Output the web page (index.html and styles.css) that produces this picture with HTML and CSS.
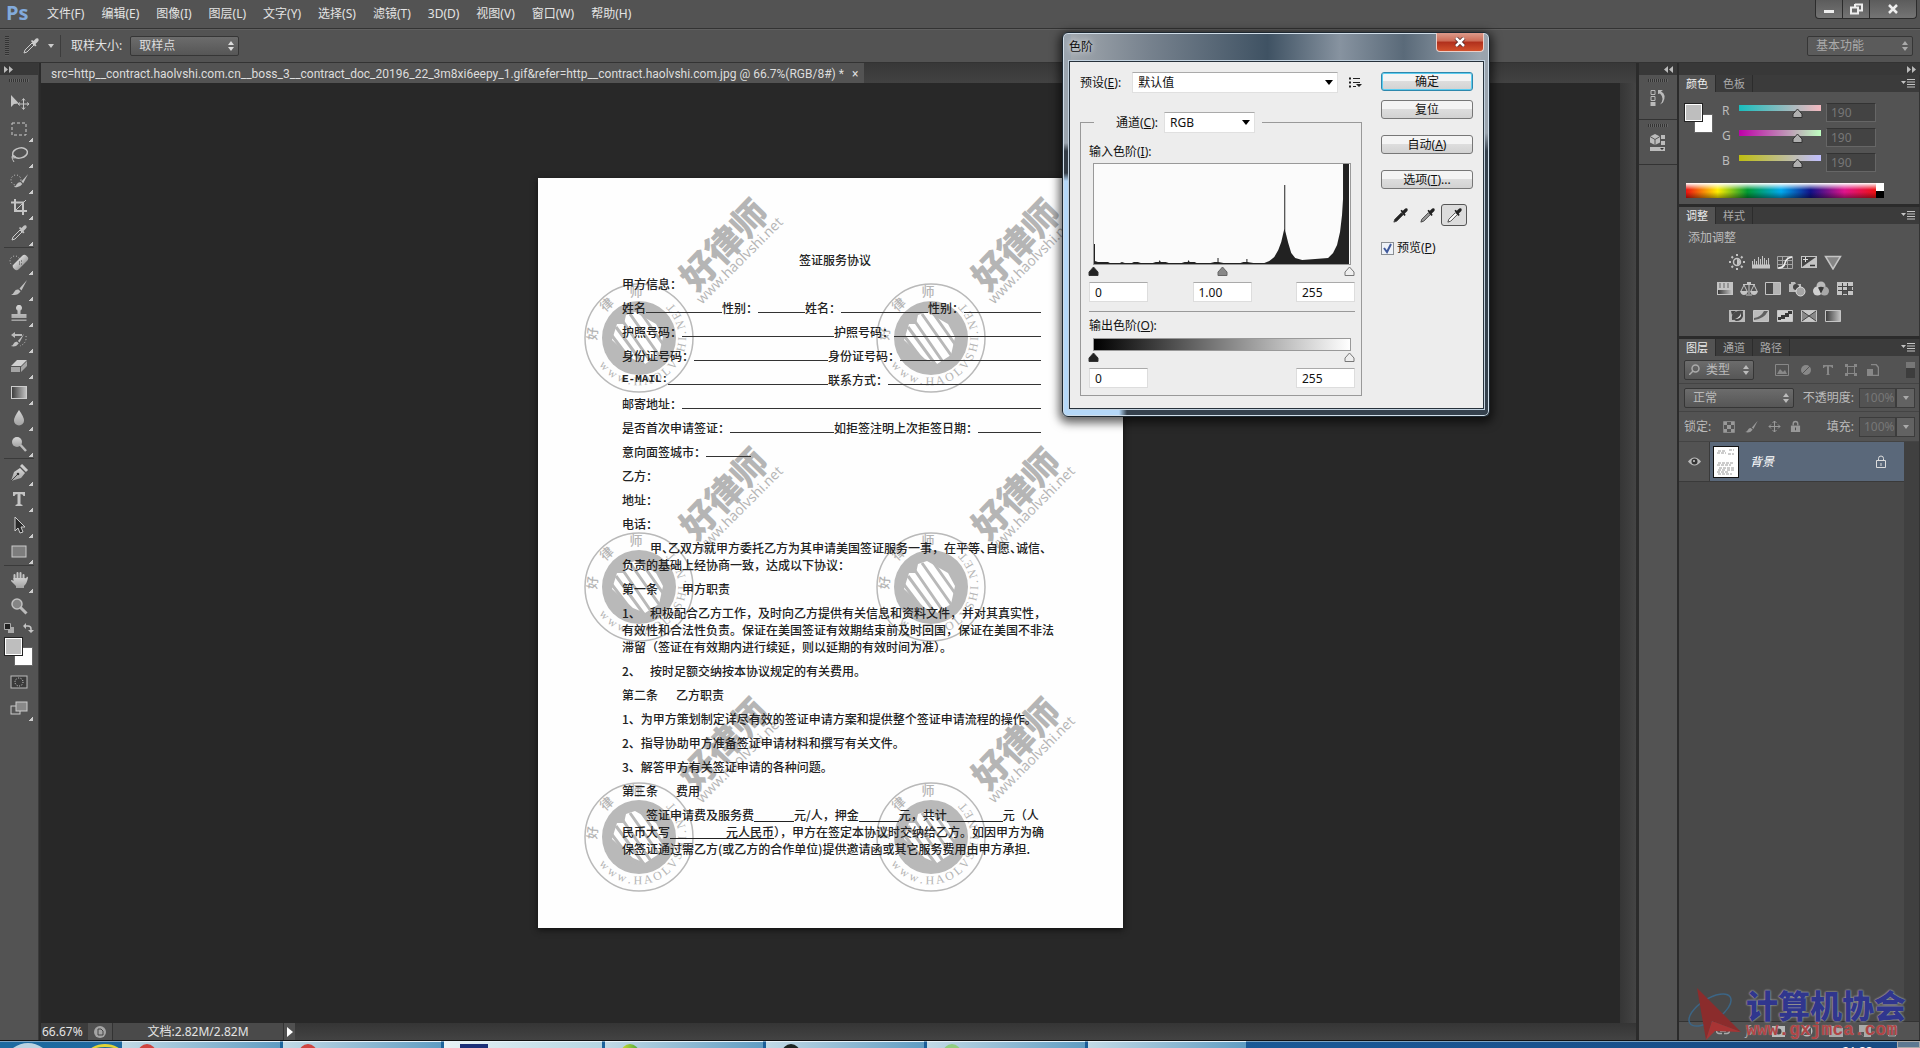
FILE: index.html
```html
<!DOCTYPE html>
<html lang="zh-CN">

<head>
    <meta charset="UTF-8">
    <meta name="viewport" content="width=device-width, initial-scale=1.0">
    <title>Photoshop</title>
    <link rel="stylesheet" href="styles.css">
</head>

<body>
    <!-- 公用图标 -->
    <svg class="sprite" aria-hidden="true">
        <defs>
            <linearGradient id="metal" x1="0" y1="0" x2="0" y2="1">
                <stop offset="0" stop-color="#d6d6d6" />
                <stop offset="1" stop-color="#a2a2a2" />
            </linearGradient>
            <linearGradient id="fade">
                <stop offset="0" stop-color="#3a3a3a" />
                <stop offset="1" stop-color="#c4c4c4" />
            </linearGradient>
            <symbol id="i-dropper" viewBox="0 0 18 18">
                <path class="tube" d="M2 16l1-3 7-7 2 2-7 7z" />
                <path d="M9 4l1-1 1.500 1L14 1.600q2-1 2.500.5t-.5 2.500L13.500 7l1 1.500-1.500 1z" fill="currentColor" />
            </symbol>
            <symbol id="i-lock" viewBox="0 0 12 14">
                <path d="M3.500 6V4a2.500 2.500 0 0 1 5 0v2" fill="none" stroke="currentColor" stroke-width="1.500" />
                <path d="M1 6h10v7H1z" fill="currentColor" />
                <path d="M5.500 8h1v3h-1z" fill="#444" />
            </symbol>
            <symbol id="i-brush" viewBox="0 0 18 18">
                <path d="M17 1L9.500 9.500l2 2zM8.500 10.500q-3-.5-4 2T1 15.500q6 2 9.500-3z" fill="currentColor" />
            </symbol>
            <symbol id="i-menu" viewBox="0 0 15 9">
                <path d="M0 2h5L2.500 5z" fill="currentColor" />
                <path d="M6 .5h8M6 3h8M6 5.500h8M6 8h8" stroke="currentColor" />
            </symbol>
            <symbol id="i-updown" viewBox="0 0 6 10">
                <path d="M0 4l3-4 3 4zM0 6l3 4 3-4z" fill="currentColor" />
            </symbol>

            <!-- 文档水印 -->
            <g id="seal">
                <circle r="54" fill="none" stroke="#b9b9b9" stroke-width="1.500" />
                <circle r="37" fill="#b9b9b9" />
                <path d="M-13-23L-4-26 17-14 24-1 20 17 6 26-6 21-27 2-22-14-15-14z" fill="#fff" />
                <path d="M-17-18L14 27M-9-24L22 20M2-25L26 9M-23-11L7 30M-29-5L-4 28" stroke="#b9b9b9" stroke-width="3" />
                <g class="seal-cn">
                    <text transform="translate(-42 -4) rotate(-85)">好</text>
                    <text transform="translate(-29 -30) rotate(-44)">律</text>
                    <text transform="translate(-3 -42)">师</text>
                </g>
                <path id="arc" d="M-40 27A48 48 0 1 0 20-44" fill="none" />
                <text class="seal-en"><textPath href="#arc">w w w . H A O L V S H I . N E T</textPath></text>
            </g>
            <g id="mark">
                <text class="mark-cn" transform="translate(184 65) rotate(-46)">好律师</text>
                <text class="mark-en" transform="translate(201 82) rotate(-45)">www.haolvshi.net</text>
            </g>
        </defs>
    </svg>

    <header class="menubar">
        <span class="logo">Ps</span>
        <nav class="menu">
            <a href="#">文件(F)</a>
            <a href="#">编辑(E)</a>
            <a href="#">图像(I)</a>
            <a href="#">图层(L)</a>
            <a href="#">文字(Y)</a>
            <a href="#">选择(S)</a>
            <a href="#">滤镜(T)</a>
            <a href="#">3D(D)</a>
            <a href="#">视图(V)</a>
            <a href="#">窗口(W)</a>
            <a href="#">帮助(H)</a>
        </nav>
        <div class="win-btns">
            <button aria-label="最小化"><svg width="12" height="12"><path d="M1 7h10v3H1z" fill="#eee" /></svg></button>
            <button aria-label="还原"><svg width="13" height="12"><path d="M5 1.500h7v6H9M5 1v3M1 4.500h7v6H1z" fill="none" stroke="#eee" stroke-width="2" /></svg></button>
            <button class="wide" aria-label="关闭"><svg width="12" height="12"><path d="M2 2l8 8M10 2l-8 8" stroke="#eee" stroke-width="2.500" /></svg></button>
        </div>
    </header>

    <div class="optbar">
        <i class="grip-v"></i>
        <svg class="cur-tool" width="18" height="18"><use href="#i-dropper" /></svg>
        <i class="caret"></i>
        <label class="opt-label" for="sample">取样大小:</label>
        <div class="dark-select sample">
            <select id="sample"><option>取样点</option></select>
            <svg width="6" height="10"><use href="#i-updown" /></svg>
        </div>
        <div class="dark-select workspace">
            <select aria-label="工作区"><option>基本功能</option></select>
            <svg width="6" height="10"><use href="#i-updown" /></svg>
        </div>
    </div>

    <main class="main">
        <aside class="tools">
            <div class="strip"><svg width="9" height="7"><path d="M0 0l4 3.500L0 7zM5 0l4 3.500L5 7z" fill="#bbb" /></svg></div>
            <i class="grip"></i>
            <button class="no-more" aria-label="移动"><svg viewBox="0 0 20 18"><path d="M2 1v12l3-3 5-.5z" fill="#c4c4c4" /><path d="M14.500 5v10M9.500 10h10M13 6.500l1.500-2 1.500 2M13 13.500l1.500 2 1.500-2M11 8.500l-2 1.500 2 1.500M18 8.500l2 1.500-2 1.500" fill="none" stroke="#c4c4c4" /></svg></button>
            <button aria-label="选框"><svg viewBox="0 0 20 18"><rect x="3" y="3" width="14" height="12" fill="none" stroke="#ccc" stroke-dasharray="3 2" /></svg></button>
            <button aria-label="套索"><svg viewBox="0 0 20 18"><ellipse cx="11" cy="7" rx="7.500" ry="5" transform="rotate(-12 11 7)" fill="none" stroke="#c4c4c4" stroke-width="1.500" /><path d="M4 9q-2 3 1 3t1-2q-3-1-3 1t2 5" fill="none" stroke="#c4c4c4" /></svg></button>
            <button aria-label="快速选择"><svg viewBox="0 0 20 18"><circle cx="7" cy="8" r="5" fill="none" stroke="#ccc" stroke-dasharray="1 2" /><use href="#i-brush" x="4" y="1" width="16" height="16" /></svg></button>
            <button aria-label="裁剪"><svg viewBox="0 0 20 18"><path d="M6 1v12h12M2 4.500h12V17" fill="none" stroke="#c4c4c4" stroke-width="2" /><path d="M6 13L17 2" stroke="#c4c4c4" /></svg></button>
            <button aria-label="吸管"><svg viewBox="0 0 20 18"><use href="#i-dropper" width="18" height="18" x="1" /></svg></button>
            <hr>
            <button aria-label="修复画笔"><svg viewBox="0 0 20 18"><circle cx="6" cy="8" r="5" fill="none" stroke="#ccc" stroke-dasharray="1 2" /><rect x="2.500" y="6" width="18" height="7" rx="3" transform="rotate(-45 11.500 9.500)" fill="url(#metal)" /><path d="M10 9h1M12 11h1M12 8h1M10 11h1" stroke="#444" /></svg></button>
            <button aria-label="画笔"><svg viewBox="0 0 20 18"><use href="#i-brush" width="18" height="18" x="1" /></svg></button>
            <button aria-label="仿制图章"><svg viewBox="0 0 20 18"><path d="M8.500 9V5.500a3 3 0 1 1 3 0V9h6v4h-15V9zM2.500 14.500h15V16h-15z" fill="url(#metal)" /></svg></button>
            <button aria-label="历史画笔"><svg viewBox="0 0 20 18"><path d="M2 4l4-3v2h7v2H6v2z" fill="#bbb" /><use href="#i-brush" x="1" y="2" width="15" height="15" /><path d="M17 5q1 7-6 10" fill="none" stroke="#ccc" stroke-dasharray="1 2" /></svg></button>
            <button aria-label="橡皮擦"><svg viewBox="0 0 20 18"><path d="M8 3h10l-6 6H2z" fill="#d0d0d0" /><path d="M2 10h9v5H2zM12 10l6-6v5l-6 6z" fill="#a4a4a4" /></svg></button>
            <button aria-label="渐变"><svg viewBox="0 0 20 18"><rect x="2.500" y="3.500" width="15" height="12" fill="url(#fade)" stroke="#ccc" /></svg></button>
            <button aria-label="模糊"><svg viewBox="0 0 20 18"><path d="M10 1q-5 7-5 10.500a5 5 0 0 0 10 0Q15 8 10 1z" fill="url(#metal)" /></svg></button>
            <button aria-label="减淡"><svg viewBox="0 0 20 18"><circle cx="8" cy="7" r="5" fill="url(#metal)" /><path d="M11.500 10l5.500 6" stroke="#bbb" stroke-width="2.500" /></svg></button>
            <hr>
            <button aria-label="钢笔"><svg viewBox="0 0 20 18"><path d="M2 17L5 8l6-4 5 5-4 5z" fill="url(#metal)" /><path d="M2 17l6-6" stroke="#444" /><circle cx="9" cy="10" r="1.300" fill="#333" /><path d="M12 1l6 6" stroke="#ccc" stroke-width="3" /></svg></button>
            <button aria-label="文字"><svg viewBox="0 0 20 18"><path d="M4 2h12v4h-1.500q-.5-2-3-2v10l2 1v1h-7v-1l2-1V4q-2.500 0-3 2H4z" fill="#c4c4c4" /></svg></button>
            <button aria-label="路径选择"><svg viewBox="0 0 20 18"><path d="M6 1v14l3-3 2 5 3-1-2-5h4z" fill="#2a2a2a" stroke="#ccc" /></svg></button>
            <button aria-label="矩形"><svg viewBox="0 0 20 18"><rect x="3" y="4" width="14" height="11" fill="#7d7d7d" stroke="#ccc" /></svg></button>
            <hr>
            <button aria-label="抓手"><svg viewBox="0 0 20 18"><path d="M5.500 8V4M8.500 7V2M11.500 7V2M14.500 8V4" stroke="#c4c4c4" stroke-width="2" stroke-linecap="round" /><path d="M4.500 7h11q2 1 2.500-1.500l1 1q-1 6-4 8.500v2H7v-2l-5-5q0-2 2.500 0z" fill="url(#metal)" /></svg></button>
            <button class="no-more" aria-label="缩放"><svg viewBox="0 0 20 18"><path d="M11.500 10.500l6 6" stroke="#bbb" stroke-width="3" /><circle cx="8" cy="7" r="5" fill="#858585" stroke="#c0c0c0" stroke-width="1.500" /></svg></button>
            <div class="swap">
                <svg width="10" height="10"><path d="M4 4h6v6H4z" fill="#aaa" /><path d="M.5.5h6v6h-6z" fill="#222" stroke="#aaa" /></svg>
                <svg width="11" height="10"><path d="M2 3h3q3 0 3 3v2" fill="none" stroke="#c4c4c4" stroke-width="1.500" /><path d="M0 3l3-3v6zM5 7h6l-3 3z" fill="#c4c4c4" /></svg>
            </div>
            <div class="swatch"><i class="bg"></i><i class="fg"></i></div>
            <button class="no-more" aria-label="快速蒙版"><svg viewBox="0 0 20 18"><rect x="2" y="3" width="16" height="12" fill="#3a3a3a" stroke="#bbb" /><circle cx="10" cy="9" r="4" fill="none" stroke="#ddd" stroke-dasharray="1 1.500" /></svg></button>
            <button aria-label="屏幕模式"><svg viewBox="0 0 20 18"><rect x="2" y="7" width="9" height="8" fill="#555" stroke="#ccc" /><rect x="7" y="3" width="11" height="9" fill="#888" stroke="#ccc" /></svg></button>
        </aside>

        <section class="doc">
            <div class="tabs">
                <div class="tab">src=http__contract.haolvshi.com.cn__boss_3__contract_doc_20196_22_3m8xi6eepy_1.gif&amp;refer=http__contract.haolvshi.com.jpg @ 66.7%(RGB/8#) * <button aria-label="关闭文档">×</button></div>
            </div>
            <div class="stage">
                <div class="canvas">
                    <article class="paper">
                        <svg class="watermark" viewBox="0 0 585 750">
                            <use href="#mark" /><use href="#mark" x="292" />
                            <use href="#mark" y="249" /><use href="#mark" x="292" y="249" />
                            <use href="#mark" y="499" /><use href="#mark" x="292" y="499" />
                            <use href="#seal" x="101" y="160" /><use href="#seal" x="393" y="160" />
                            <use href="#seal" x="101" y="409" /><use href="#seal" x="393" y="409" />
                            <use href="#seal" x="101" y="659" /><use href="#seal" x="393" y="659" />
                        </svg>
                        <h1>签证服务协议</h1>
                        <p>甲方信息：</p>
                        <p class="row"><span class="field f-name">姓名<i></i></span><span class="field f-sex">性别：<i></i></span><span class="field f-name2">姓名：<i></i></span><span class="field">性别：<i></i></span></p>
                        <p class="row"><span class="field f-half">护照号码：<i></i></span><span class="field">护照号码：<i></i></span></p>
                        <p class="row"><span class="field f-id">身份证号码：<i></i></span><span class="field">身份证号码：<i></i></span></p>
                        <p class="row"><span class="field f-id"><b>E-MAIL:</b><i></i></span><span class="field">联系方式：<i></i></span></p>
                        <p class="row"><span class="field">邮寄地址：<i></i></span></p>
                        <p class="row"><span class="field f-half">是否首次申请签证：<i></i></span><span class="field">如拒签注明上次拒签日期：<i></i></span></p>
                        <p class="row"><span class="field f-city">意向面签城市：<i></i></span></p>
                        <p>乙方：</p>
                        <p>地址：</p>
                        <p>电话：</p>
                        <p><span class="tab-in"></span>甲<s>、</s>乙双方就甲方委托乙方为其申请美国签证服务一事，在平等<s>、</s>自愿<s>、</s>诚信<s>、</s><br>负责的基础上经协商一致，达成以下协议：</p>
                        <p>第一条<span class="gap"></span>甲方职责</p>
                        <p><span class="num">1、</span>积极配合乙方工作，及时向乙方提供有关信息和资料文件，并对其真实性，<br>有效性和合法性负责。保证在美国签证有效期结束前及时回国，保证在美国不非法<br>滞留（签证在有效期内进行续延，则以延期的有效时间为准）。</p>
                        <p><span class="num">2、</span>按时足额交纳按本协议规定的有关费用。</p>
                        <p>第二条<span class="gap short"></span>乙方职责</p>
                        <p>1、为甲方策划制定详尽有效的签证申请方案和提供整个签证申请流程的操作。</p>
                        <p>2、指导协助甲方准备签证申请材料和撰写有关文件。</p>
                        <p>3、解答甲方有关签证申请的各种问题。</p>
                        <p>第三条<span class="gap short"></span>费用</p>
                        <p><span class="gap"></span>签证申请费及服务费<i class="fill"></i>元/人，押金<i class="fill"></i>元，共计<i class="fill long"></i>元（人<br>民币大写<i class="fill long"></i><u>元人民币</u>），甲方在签定本协议时交纳给乙方。如因甲方为确<br>保签证通过需乙方(或乙方的合作单位)提供邀请函或其它服务费用由甲方承担.</p>
                    </article>
                </div>
                <div class="vscroll"></div>
            </div>
            <footer class="status">
                <span class="zoom">66.67%</span>
                <span class="st-icon"><svg width="12" height="12"><circle cx="6" cy="6" r="6" fill="#a5a5a5" /><path d="M4 3h3l2 2v4H4z" fill="none" stroke="#444" /></svg></span>
                <span class="size">文档:2.82M/2.82M</span>
                <button aria-label="状态菜单"><svg width="6" height="10"><path d="M0 0l6 5-6 5z" fill="#fff" /></svg></button>
            </footer>
        </section>

        <aside class="dock">
            <div class="strip end"><svg width="9" height="7"><path d="M4 0L0 3.500 4 7zM9 0L5 3.500 9 7z" fill="#bbb" /></svg></div>
            <div class="dock-box">
                <i class="grip"></i>
                <button aria-label="历史记录"><svg width="18" height="19"><path d="M2 2.500h4v4H2zM2 8.500h4v4H2z" fill="none" stroke="#bbb" /><path d="M1.500 14h5v4h-5z" fill="#bbb" /><path d="M9 6V2h5l-2 1.500q6 3 2 11l-3 2q5-6 0-11z" fill="#bbb" /></svg></button>
            </div>
            <div class="dock-box">
                <i class="grip"></i>
                <button aria-label="属性"><svg width="18" height="19"><path d="M6 1l5 2.500v6L6 12 1 9.500v-6z" fill="#bbb" /><path d="M1 3.500l5 3 5-3M6 6.500V12" fill="none" stroke="#555" /><path d="M12 2h4v4h-4zM12 8h4v4h-4zM1 14h15v4H1z" fill="#bbb" /><path d="M11 15h4l-2 2z" fill="#333" /></svg></button>
            </div>
        </aside>

        <aside class="panels">
            <div class="strip end"><svg width="9" height="7"><path d="M0 0l4 3.500L0 7zM5 0l4 3.500L5 7z" fill="#bbb" /></svg></div>

            <section class="panel">
                <div class="ptabs"><a class="on" href="#">颜色</a><a href="#">色板</a><svg width="15" height="9"><use href="#i-menu" /></svg></div>
                <div class="color">
                    <div class="swatch"><i class="bg"></i><i class="fg"></i></div>
                    <div class="channels">
                        <div class="channel"><label for="r">R</label><input class="bar-r" type="range" min="0" max="255" value="190" aria-label="红"><input id="r" type="text" value="190"></div>
                        <div class="channel"><label for="g">G</label><input class="bar-g" type="range" min="0" max="255" value="190" aria-label="绿"><input id="g" type="text" value="190"></div>
                        <div class="channel"><label for="b">B</label><input class="bar-b" type="range" min="0" max="255" value="190" aria-label="蓝"><input id="b" type="text" value="190"></div>
                    </div>
                    <div class="spectrum"><i></i></div>
                </div>
            </section>

            <section class="panel">
                <div class="ptabs"><a class="on" href="#">调整</a><a href="#">样式</a><svg width="15" height="9"><use href="#i-menu" /></svg></div>
                <div class="adjust">
                    <h2>添加调整</h2>
                    <div class="icons">
                        <svg viewBox="0 0 18 16"><circle cx="9" cy="8" r="3.500" fill="none" stroke="#c4c4c4" stroke-width="1.500" /><path d="M9 5v6a3 3 0 0 0 0-6z" fill="#c4c4c4" /><path d="M9 0v2M9 14v2M1 8h2M15 8h2M3.500 2.500L5 4M14.500 2.500L13 4M3.500 13.500L5 12M14.500 13.500L13 12" stroke="#c4c4c4" stroke-width="2" /></svg>
                        <svg viewBox="0 0 18 16"><path d="M0 11h18v3H0zM.5 11V7M2.500 11V5M4.500 11V7M6.500 11V3M8.500 11V5M10.500 11V2M12.500 11V4M14.500 11V6M16.500 11V4" fill="#c4c4c4" stroke="#c4c4c4" /></svg>
                        <svg viewBox="0 0 18 16"><path d="M1.500 2.500h15v12h-15zM6.500 2v12M11.500 2v12M1 6.500h15M1 10.500h15" fill="none" stroke="#a4a4a4" /><path d="M2 14q6 0 7-5t7-6" fill="none" stroke="#eee" stroke-width="1.500" /></svg>
                        <svg viewBox="0 0 18 16"><path d="M1 2h16v12H1z" fill="#c4c4c4" /><path d="M2 3h14L2 13z" fill="#444" /><path d="M3 5.500h5M5.500 3v5" stroke="#ddd" /><path d="M10 11.500h5" stroke="#333" stroke-width="1.500" /></svg>
                        <svg viewBox="0 0 18 16"><path d="M1.500 2.500h15L9 15z" fill="#858585" stroke="#c4c4c4" stroke-width="1.500" /></svg>
                    </div>
                    <div class="icons">
                        <svg viewBox="0 0 18 16"><path d="M1 1h16v13H1z" fill="#c4c4c4" /><path d="M4 2v5M8 2v5M12 2v5" stroke="#666" /><path d="M2 9h14v4H2z" fill="url(#fade)" /></svg>
                        <svg viewBox="0 0 18 16"><path d="M9 1v12M3 3.500h12M4 4l-3 6M4 4l3 6M14 4l-3 6M14 4l3 6M6 14h6" fill="none" stroke="#c4c4c4" /><path d="M0 10h8q-1 4-4 4t-4-4zM10 10h8q-1 4-4 4t-4-4zM7 1h4v3H7z" fill="#c4c4c4" /></svg>
                        <svg viewBox="0 0 18 16"><path d="M1.500 1.500h15v12h-15z" fill="#4a4a4a" stroke="#c4c4c4" /><path d="M9 2h7v11H9z" fill="#b4b4b4" /></svg>
                        <svg viewBox="0 0 18 16"><path d="M1 3h2V1h4l1 2h5v8H1z" fill="#bbb" /><circle cx="8" cy="6" r="3" fill="#444" /><circle cx="12.500" cy="10.500" r="4.500" fill="#a5a5a5" stroke="#ddd" /></svg>
                        <svg viewBox="0 0 18 16"><circle cx="9" cy="5" r="4.500" fill="#bbb" /><circle cx="5.500" cy="10" r="4.500" fill="#d0d0d0" /><circle cx="12.500" cy="10" r="4.500" fill="#a8a8a8" /><path d="M6 6.500q3-1.500 6 0l-3 6z" fill="#383838" /></svg>
                        <svg viewBox="0 0 18 16"><path d="M1 1h16v13H1z" fill="#c4c4c4" /><path d="M6.500 2v12M11.500 2v12M2 5.500h15M2 9.500h15" stroke="#444" /><path d="M12 6h4v3h-4zM7 10h4v3H7z" fill="#555" /></svg>
                    </div>
                    <div class="icons">
                        <svg viewBox="0 0 18 16"><path d="M1 2h16v12H1z" fill="#bbb" /><path d="M3 3h5l-4 4zM15 5v3q-1 5-7 5l-3-2q0 1 3 0 5-2 7-6z" fill="#444" /><path d="M4 12q-1-6 3-8t8-1q0 7-4 8t-7 1z" fill="#4a4a4a" /><path d="M7 11q5-2 6-6 1 6-6 6z" fill="#ddd" /></svg>
                        <svg viewBox="0 0 18 16"><path d="M1.500 2.500h15v11h-15z" fill="#bbb" stroke="#c4c4c4" /><path d="M2 10q7-1 10-7h4q-4 8-14 9z" fill="#606060" /></svg>
                        <svg viewBox="0 0 18 16"><path d="M1.500 2.500h15v11h-15z" fill="#d0d0d0" stroke="#c4c4c4" /><path d="M2 9h3V7h4V5h3V3h4v3h-3v3h-4v2H5v1H2z" fill="#383838" /></svg>
                        <svg viewBox="0 0 18 16"><path d="M1.500 2.500h15v11h-15z" fill="#888" stroke="#c4c4c4" /><path d="M2 3l7 5 7-5zM2 13l7-5 7 5z" fill="#c8c8c8" /><path d="M2 3l14 10M16 3L2 13" stroke="#444" /></svg>
                        <svg viewBox="0 0 18 16"><path d="M1.500 2.500h15v11h-15z" fill="url(#fade)" stroke="#c4c4c4" /></svg>
                    </div>
                </div>
            </section>

            <section class="panel layers">
                <div class="ptabs"><a class="on" href="#">图层</a><a href="#">通道</a><a href="#">路径</a><svg width="15" height="9"><use href="#i-menu" /></svg></div>
                <div class="lrow filter">
                    <div class="dark-select kind">
                        <svg class="mag" width="11" height="11"><circle cx="6.500" cy="4.500" r="3.500" fill="none" stroke="#aaa" stroke-width="1.500" /><path d="M4 7l-4 4" stroke="#aaa" stroke-width="1.500" /></svg>
                        <select aria-label="筛选"><option>类型</option></select>
                        <svg width="6" height="10"><use href="#i-updown" /></svg>
                    </div>
                    <div class="lfilters">
                        <svg width="14" height="12"><path d="M.5.5h13v11H.5z" fill="none" stroke="#888" /><path d="M2 10l3-5 3 3 2-2 2 4z" fill="#888" /></svg>
                        <svg width="12" height="12"><circle cx="6" cy="6" r="5" fill="#888" /><path d="M2 10L10 2" stroke="#555" /></svg>
                        <svg width="12" height="12"><path d="M1 1h10v3h-1q0-1.500-2-1.500H7V10l1 1H4l1-1V2.500H4Q2 2.500 2 4H1z" fill="#888" /></svg>
                        <svg width="12" height="12"><path d="M2.500 2.500h7v7h-7z" fill="none" stroke="#888" /><path d="M0 0h3v3H0zM9 0h3v3H9zM0 9h3v3H0zM9 9h3v3H9z" fill="#888" /></svg>
                        <svg width="12" height="12"><path d="M4 .5h5l2.500 3v8H6" fill="none" stroke="#888" stroke-width="1.500" /><path d="M0 5h6v7H0z" fill="#888" /></svg>
                    </div>
                    <i class="toggle"></i>
                </div>
                <div class="lrow">
                    <div class="dark-select mode">
                        <select aria-label="混合模式"><option>正常</option></select>
                        <svg width="6" height="10"><use href="#i-updown" /></svg>
                    </div>
                    <label class="amount">不透明度: <input type="text" value="100%"><i class="drop"></i></label>
                </div>
                <div class="lrow lock-row">
                    <span>锁定:</span>
                    <div class="locks">
                        <svg width="12" height="12"><path d="M.5.500h11v11H.5z" fill="#555" stroke="#888" /><path d="M1 1h3v3H1zM8 1h3v3H8zM4 4h4v4H4zM1 8h3v3H1zM8 8h3v3H8z" fill="#999" /></svg>
                        <svg width="15" height="14"><use href="#i-brush" width="15" height="14" /></svg>
                        <svg width="13" height="13"><path d="M6.500 1v11M1 6.500h11M4.500 3l2-2 2 2M4.500 10l2 2 2-2M3 4.500l-2 2 2 2M10 4.500l2 2-2 2" fill="none" stroke="#999" /></svg>
                        <svg width="11" height="13"><use href="#i-lock" width="11" height="13" /></svg>
                    </div>
                    <label class="amount">填充: <input type="text" value="100%"><i class="drop"></i></label>
                </div>
                <div class="list">
                    <div class="list-body">
                        <div class="layer">
                            <span class="eye"><svg width="13" height="9"><path d="M0 4.500q6.500-8 13 0-6.500 8-13 0z" fill="#b9b9b9" /><circle cx="6.500" cy="4.500" r="3" fill="#333" /><circle cx="6" cy="4" r="1" fill="#ccc" /></svg></span>
                            <svg class="thumb" viewBox="0 0 24 30"><path d="M4 4h8M15 3h5M3 6h9M14 7h6M4 16h16M3 18h14M5 21h15M4 23h7M13 23h7M3 25h12M4 27h14" stroke="#9a9a9a" stroke-dasharray="3 1" /></svg>
                            <em>背景</em>
                            <svg class="lk" width="12" height="13"><path d="M3.500 6V3.500a2.500 2.500 0 0 1 5 0V6M1.500 5.500h9v7h-9zM6 8v3" fill="none" stroke="#ddd" /></svg>
                        </div>
                    </div>
                    <div class="list-scroll"></div>
                </div>
                <div class="lfoot">
                    <svg width="14" height="8"><path d="M6 1.500H3a2 2 0 0 0 0 5h3M8 1.500h3a2 2 0 0 1 0 5H8M4 4h6" fill="none" stroke="#aaa" stroke-width="1.500" /></svg>
                    <em>fx</em>
                    <svg width="13" height="11"><path d="M0 0h13v11H0z" fill="#bbb" /><circle cx="6.500" cy="5.500" r="3" fill="#444" /></svg>
                    <svg width="12" height="12"><circle cx="6" cy="6" r="5.500" fill="#bbb" /><path d="M2 10L10 2v8z" fill="#555" /></svg>
                    <svg width="14" height="11"><path d="M0 0h5l1 2h8v9H0z" fill="#aaa" /></svg>
                    <svg width="12" height="12"><path d="M0 0h12v12H5L0 7z" fill="#aaa" /><path d="M0 7h5v5" fill="#555" /></svg>
                    <svg width="10" height="12"><path d="M0 2h10M3 1h4M1.500 4h7v7h-7z" fill="none" stroke="#aaa" /></svg>
                </div>
            </section>
        </aside>
    </main>

    <div class="taskbar">
        <span class="orb"></span><span class="ie"></span>
        <span class="task red"></span><span class="task red"></span><span class="task light navy"></span><span class="task lime"></span><span class="task black"></span><span class="task green"></span><span class="task"></span>
        <span class="clock">21:33</span>
        <span class="show"></span>
    </div>

    <!-- 色阶对话框 -->
    <form class="dialog" role="dialog" aria-label="色阶">
        <div class="dlg-title"><span>色阶</span><button type="button" aria-label="关闭"><svg width="12" height="10"><path d="M2 1l8 8M10 1L2 9" stroke="#4c2020" stroke-width="4" /><path d="M2 1l8 8M10 1L2 9" stroke="#fff" stroke-width="2.500" /></svg></button></div>
        <div class="dlg-body">
            <div class="dlg-left">
                <div class="preset">
                    <label for="preset">预设(<u>E</u>):</label>
                    <select id="preset"><option>默认值</option></select>
                    <svg width="13" height="11"><path d="M0 .5h2v2H0zM0 4.500h2v2H0zM0 8.500h2v2H0zM7 7h6l-3 3z" fill="#222" /><path d="M4 1.500h7M4 5.500h7M4 9.500h3" stroke="#222" /></svg>
                </div>
                <fieldset>
                    <legend><label for="chan">通道(<u>C</u>):</label><select id="chan"><option>RGB</option></select></legend>
                    <label for="in-low">输入色阶(<u>I</u>):</label>
                    <svg class="histo" viewBox="0 0 257 100" preserveAspectRatio="none">
                        <path d="M0 100V80h1v17l3 1h10l2 1h10l2-1 3 1h7l2-1h4l3 1h12l3-1h3l1-2 1 2h5l3 1h13l3-1h3l1-2 1 2h5l2 1h14l4-1h3v-4h1v4l5 1h17l3-1h3v-3h1v3l6 1h11l5-2 5-4 4-7 3-8 3-13V21h1v46l3 12 3 10 4 5 7 2 13-1 13-1 5-5 4-8 3-13 2-17 1-16V0h6v100z" fill="#222" />
                    </svg>
                    <div class="thumbs">
                        <input class="t-white" type="range" min="0" max="255" value="255" aria-label="高光">
                        <input class="t-gray" type="range" min="0" max="255" value="128" aria-label="中间调">
                        <input class="t-black" type="range" min="0" max="255" value="0" aria-label="阴影">
                    </div>
                    <div class="nums"><input id="in-low" type="text" value="0"><input type="text" value="1.00" aria-label="中间调值"><input type="text" value="255" aria-label="高光值"></div>
                    <hr>
                    <label for="out-low">输出色阶(<u>O</u>):</label>
                    <div class="ramp"></div>
                    <div class="thumbs">
                        <input class="t-white" type="range" min="0" max="255" value="255" aria-label="输出高光">
                        <input class="t-black" type="range" min="0" max="255" value="0" aria-label="输出阴影">
                    </div>
                    <div class="nums"><input id="out-low" type="text" value="0"><input type="text" value="255" aria-label="输出高光值"></div>
                </fieldset>
            </div>
            <div class="dlg-right">
                <button type="button" class="btn ok">确定</button>
                <button type="button" class="btn">复位</button>
                <button type="button" class="btn spaced">自动(<u>A</u>)</button>
                <button type="button" class="btn spaced">选项(<u>T</u>)...</button>
                <div class="pickers">
                    <button type="button" class="p-black" aria-label="黑场"><svg width="17" height="17"><use href="#i-dropper" /></svg></button>
                    <button type="button" class="p-gray" aria-label="灰场"><svg width="17" height="17"><use href="#i-dropper" /></svg></button>
                    <button type="button" class="p-white" aria-label="白场"><svg width="17" height="17"><use href="#i-dropper" /></svg></button>
                </div>
                <label class="preview"><input type="checkbox" checked>预览(<u>P</u>)</label>
            </div>
        </div>
    </form>

    <!-- 右下角站点标识 -->
    <div class="site">
        <svg width="54" height="52" viewBox="0 0 54 52"><ellipse cx="22" cy="22" rx="24" ry="11" transform="rotate(-33 22 22)" fill="none" stroke="#3c6585" stroke-width="1.500" /><path d="M9 0L53 44 24 33 18 52z" fill="#8b2c2c" /><path d="M24 33l29 11-26-1-9 9z" fill="#a83434" /></svg>
        <div><strong>计算机协会</strong><span>www.gxjmca.com</span></div>
    </div>
</body>

</html>
```

FILE: styles.css
```css
* {
    margin: 0;
    padding: 0;
    box-sizing: border-box;
}

body {
    height: 100vh;
    display: flex;
    flex-direction: column;
    overflow: hidden;
    position: relative;
    background: #535353;
    color: #e4e4e4;
    font: 12px/16px "Noto Sans", "Noto Sans CJK SC", sans-serif;
}

button, input, select {
    font: inherit;
    color: inherit;
    border: 0;
    background: none;
    border-radius: 0;
}

a {
    color: inherit;
    text-decoration: none;
}

select {
    appearance: none;
}

svg {
    display: block;
    flex: none;
}

.sprite {
    position: absolute;
    width: 0;
    height: 0;
}

/* 菜单栏 */
.menubar {
    height: 29px;
    flex: none;
    display: flex;
    align-items: flex-start;
    border-bottom: 1px solid #333;
}

.logo {
    width: 47px;
    padding-left: 6px;
    color: #82aadb;
    font: bold 20px/26px "Open Sans", sans-serif;
}

.menu {
    display: flex;
    gap: 17px;
    padding-top: 6px;
}

.win-btns {
    display: flex;
    margin-left: auto;
    margin-right: 3px;
    height: 19px;
    border: 1px solid #2c2c2c;
    border-top: 0;
    border-radius: 0 0 4px 4px;
    background: linear-gradient(#5c5c5c, #747474);
}

.win-btns button {
    width: 27px;
    display: flex;
    justify-content: center;
    align-items: center;
    border-right: 1px solid #2c2c2c;
}

.win-btns .wide {
    width: 46px;
    border: 0;
}

/* 选项栏 */
.optbar {
    height: 34px;
    flex: none;
    display: flex;
    align-items: center;
    padding: 0 7px 0 5px;
    border-top: 1px solid #606060;
    border-bottom: 1px solid #333;
}

.grip-v {
    width: 4px;
    height: 20px;
    background: repeating-linear-gradient(#333 0 1px, #5c5c5c 1px 2px);
}

.cur-tool {
    margin-left: 13px;
    color: #ccc;
}

.tube {
    fill: var(--tube, #555);
    stroke: var(--edge, #ccc);
}

.caret {
    border: 3px solid transparent;
    border-top: 4px solid #ccc;
    border-bottom: 0;
    margin: 0 6px 0 8px;
}

.opt-label {
    border-left: 1px solid #3c3c3c;
    padding: 3px 8px 3px 10px;
}

.dark-select {
    height: 20px;
    display: flex;
    align-items: center;
    padding: 0 4px 0 8px;
    border: 1px solid #363636;
    border-radius: 2px;
    background: linear-gradient(#6c6c6c, #565656);
    color: #ddd;
}

.dark-select select {
    flex: 1;
    min-width: 0;
}

.sample {
    width: 109px;
}

.workspace {
    width: 106px;
    margin-left: auto;
    background: #5b5b5b;
    color: #aaa;
}

/* 主体 */
.main {
    flex: 1;
    min-height: 0;
    display: flex;
    background: #2b2b2b;
}

.strip {
    align-self: stretch;
    height: 12px;
    flex: none;
    display: flex;
    align-items: center;
    padding: 0 4px;
    background: #383838;
}

.strip.end {
    justify-content: flex-end;
}

.grip {
    display: block;
    width: 20px;
    height: 3px;
    margin: 4px auto 0;
    background: repeating-linear-gradient(90deg, #333 0 1px, #666 1px 2px);
}

.tools {
    width: 39px;
    flex: none;
    display: flex;
    flex-direction: column;
    align-items: center;
    background: #535353;
    border-right: 1px solid #3a3a3a;
}

.tools .grip {
    margin-bottom: 8px;
}

.tools button {
    width: 28px;
    height: 26px;
    flex: none;
    display: grid;
    place-items: center;
    color: #c0c0c0;
    background: linear-gradient(135deg, transparent 50%, #ccc 50%) right bottom / 4px 4px no-repeat;
}

.tools .no-more {
    background: none;
}

.tools button svg {
    width: 20px;
    height: 18px;
}

.tools hr {
    width: 30px;
    height: 1px;
    flex: none;
    margin: 1px 0;
    border: 0;
    background: #3a3a3a;
}

.swap {
    width: 30px;
    display: flex;
    justify-content: space-between;
    padding: 4px 0;
}

.swatch {
    width: 30px;
    height: 32px;
    display: grid;
    align-content: start;
}

.swatch i {
    grid-area: 1 / 1;
    width: 19px;
    height: 19px;
    border: 1px solid #222;
}

.swatch .fg {
    background: #bebebe;
    box-shadow: inset 0 0 0 1px #fff;
}

.swatch .bg {
    background: #fff;
    border-color: #666;
    margin: 10px 0 0 10px;
}

/* 文档 */
.doc {
    flex: 1;
    min-width: 0;
    display: flex;
    flex-direction: column;
    margin: 0 3px 0 2px;
}

.tabs {
    height: 20px;
    flex: none;
    display: flex;
    background: linear-gradient(#383838, #424242);
}

.tab {
    display: flex;
    align-items: center;
    padding: 2px 6px 0 10px;
    background: #535353;
    white-space: nowrap;
    color: #ddd;
    font-family: Roboto, "Noto Sans", sans-serif;
}

.tab button {
    margin-left: 8px;
}

.stage {
    flex: 1;
    min-height: 0;
    display: flex;
}

.canvas {
    flex: 1;
    display: flex;
    align-items: center;
    justify-content: center;
    background: #282828;
}

.vscroll {
    width: 16px;
    background: linear-gradient(90deg, #363636, #444);
}

.paper {
    position: relative;
    width: 585px;
    min-height: 750px;
    padding: 73px 0 0 84px;
    background: #fefefe;
    color: #222;
    box-shadow: 0 2px 6px #111;
    font: 500 12px/17px "Noto Sans CJK SC", sans-serif;
    white-space: nowrap;
}

.watermark {
    position: absolute;
    left: 0;
    top: 0;
    width: 100%;
    height: 100%;
}

.seal-cn, .mark-cn, .mark-en, .seal-en {
    fill: #b5b5b5;
}

.seal-cn {
    font: 500 13px "Noto Sans CJK SC", sans-serif;
    text-anchor: middle;
}

.seal-en {
    font: 12px "Liberation Serif", serif;
}

.mark-cn {
    font: 900 36px "Noto Sans CJK SC", sans-serif;
    text-anchor: middle;
    dominant-baseline: central;
}

.mark-en {
    font: 14px "Open Sans", sans-serif;
    text-anchor: middle;
    dominant-baseline: central;
}

.paper h1, .paper p {
    position: relative;
    font-size: 12px;
    font-weight: 500;
    margin-bottom: 7px;
}

.paper h1 {
    padding-left: 177px;
}

.row {
    display: flex;
    width: 419px;
}

.field {
    display: flex;
    flex: 1;
}

.field i {
    flex: 1;
    height: 14px;
    border-bottom: 1px solid #333;
}

.field b {
    font: bold 11px/17px "Liberation Mono", monospace;
}

.f-name, .f-sex, .f-name2, .f-half, .f-id, .f-city {
    flex: none;
    width: 100px;
}

.f-sex {
    width: 83px;
}

.f-name2 {
    width: 123px;
}

.f-half {
    width: 212px;
}

.f-id {
    width: 206px;
}

.f-city {
    width: 129px;
}

.paper s {
    text-decoration: none;
    font-feature-settings: "halt";
}

.tab-in, .num, .gap {
    display: inline-block;
    width: 28px;
}

.gap {
    width: 24px;
}

.gap.short {
    width: 18px;
}

.fill {
    display: inline-block;
    width: 40px;
    height: 10px;
    border-bottom: 1px solid #222;
    vertical-align: -2px;
}

.fill.long {
    width: 56px;
}

.status {
    height: 17px;
    flex: none;
    display: flex;
    align-items: center;
    background: linear-gradient(#353535, #434343);
}

.status > * {
    height: 17px;
    display: flex;
    align-items: center;
    justify-content: center;
}

.status .zoom {
    width: 47px;
    justify-content: flex-start;
    padding-left: 1px;
    background: #3c3c3c;
}

.st-icon {
    width: 24px;
    background: #505050;
}

.size {
    width: 171px;
    background: #4a4a4a;
    border-left: 1px solid #333;
}

.status button {
    width: 12px;
    background: #505050;
    border-left: 1px solid #333;
}

/* 折叠面板 */
.dock {
    width: 38px;
    flex: none;
    background: #535353;
}

.dock-box {
    height: 41px;
    border-bottom: 1px solid #333;
}

.dock-box button {
    display: block;
    margin: 6px auto 0;
}

/* 右侧面板 */
.panels {
    width: 241px;
    flex: none;
    display: flex;
    flex-direction: column;
    margin-left: 2px;
}

.panel {
    background: #535353;
    margin-bottom: 3px;
    border-right: 1px solid #333;
}

.ptabs {
    height: 17px;
    flex: none;
    display: flex;
    align-items: center;
    background: #3b3b3b;
    padding-right: 3px;
    color: #aaa;
}

.ptabs a {
    height: 17px;
    padding: 1px 7px 0;
    border-right: 1px solid #2c2c2c;
    font-size: 11px;
}

.ptabs .on {
    background: #535353;
    color: #eee;
}

.ptabs svg {
    margin-left: auto;
    color: #c4c4c4;
}

.color {
    height: 112px;
    display: grid;
    grid-template-columns: auto 1fr;
    grid-template-rows: 80px auto;
    padding: 11px 35px 0 5px;
}

.color .swatch .bg {
    margin: 11px 0 0 10px;
}

.channels {
    display: flex;
    flex-direction: column;
    gap: 6px;
    padding-left: 8px;
}

.channel {
    display: flex;
    height: 19px;
    color: #bbb;
}

.channel label {
    width: 17px;
}

.channel input[type=text] {
    width: 50px;
    margin-left: 5px;
    padding-left: 4px;
    border: 1px solid #666;
    border-top-color: #333;
    background: #434343;
    color: #777;
}

input[type=range] {
    appearance: none;
}

.channel input[type=range] {
    width: 82px;
    height: 6px;
    margin-top: 2px;
}

input::-webkit-slider-thumb {
    appearance: none;
    width: 11px;
    height: 10px;
    background: url('data:image/svg+xml,<svg xmlns="http://www.w3.org/2000/svg" width="11" height="10"><path d="M5.500 1L10 6v3.500H1V6z" fill="%23b0b0b0" stroke="%23333"/></svg>');
}

.channel input::-webkit-slider-thumb {
    margin-top: 9px;
}

.bar-r {
    background: linear-gradient(90deg, #18bebe, #f4b8bf);
}

.bar-g {
    background: linear-gradient(90deg, #be00a8, #beffc0);
}

.bar-b {
    background: linear-gradient(90deg, #bebe10, #c0beff);
}

.spectrum {
    grid-column: 1 / 3;
    margin-left: 2px;
    height: 15px;
    display: flex;
    justify-content: flex-end;
    background: linear-gradient(#fff, transparent 45%, transparent 60%, #0006), linear-gradient(90deg, #e11, #fe0 16%, #093 31%, #0ae 48%, #118 63%, #e0148c 80%, #e11 96%);
}

.spectrum i {
    width: 8px;
    background: linear-gradient(#fff 50%, #000 50%);
}

.adjust {
    height: 112px;
    padding: 6px 38px 0 9px;
    color: #bbb;
}

.adjust h2 {
    font: inherit;
    margin-bottom: 8px;
}

.icons {
    display: flex;
    justify-content: center;
    gap: 6px;
    margin-bottom: 11px;
}

.icons svg {
    width: 18px;
    height: 16px;
}

.layers {
    flex: 1;
    min-height: 0;
    margin-bottom: 0;
    display: flex;
    flex-direction: column;
}

.lrow {
    height: 28px;
    flex: none;
    display: flex;
    align-items: center;
    padding: 0 4px 0 5px;
    border-bottom: 1px solid #444;
    color: #bbb;
}

.lock-row {
    height: 30px;
}

.lrow .dark-select {
    color: #bbb;
}

.kind {
    width: 70px;
    padding-left: 4px;
}

.kind select {
    padding-left: 6px;
}

.lfilters {
    flex: 1;
    display: flex;
    justify-content: space-between;
    padding: 0 27px 0 21px;
}

.toggle {
    width: 9px;
    height: 16px;
    background: linear-gradient(#777 40%, #3d3d3d 40%);
}

.mode {
    width: 110px;
}

.amount {
    margin-left: auto;
    display: flex;
    align-items: center;
    gap: 5px;
}

.amount input {
    width: 37px;
    height: 20px;
    padding-left: 4px;
    border: 1px solid #3c3c3c;
    color: #777;
}

.drop {
    width: 19px;
    height: 20px;
    margin-left: -5px;
    display: grid;
    place-items: center;
    border: 1px solid #3c3c3c;
    background: #626262;
}

.drop::after {
    content: "";
    border: 3px solid transparent;
    border-top: 4px solid #aaa;
    border-bottom: 0;
}

.locks {
    display: flex;
    align-items: center;
    gap: 9px;
    margin-left: 12px;
    color: #999;
}

.list {
    flex: 1;
    display: flex;
    min-height: 0;
    background: #494949;
}

.list-body {
    flex: 1;
}

.list-scroll {
    width: 15px;
    background: #404040;
}

.layer {
    height: 40px;
    display: flex;
    align-items: center;
    background: #5a687a;
    border-bottom: 1px solid #3a3a3a;
    color: #fff;
}

.eye {
    width: 31px;
    align-self: stretch;
    display: grid;
    place-items: center;
    background: #535353;
    border-right: 1px solid #3a3a3a;
}

.thumb {
    width: 26px;
    height: 32px;
    margin: 0 11px 0 3px;
    border: 1px solid #111;
    background: #fff;
}

.lk {
    margin: 0 17px 0 auto;
}

.lfoot {
    height: 19px;
    flex: none;
    display: flex;
    align-items: center;
    gap: 16px;
    padding-left: 37px;
    border-top: 1px solid #333;
    color: #aaa;
}

/* 任务栏 */
.taskbar {
    height: 8px;
    flex: none;
    display: flex;
    overflow: hidden;
    background: linear-gradient(90deg, #1d6aa0, #1a5794 70%, #174a82);
    border-top: 1px solid #111;
    box-shadow: inset 0 1px #7fa5c4;
}

.orb {
    width: 40px;
    height: 30px;
    margin: 2px 40px 0 8px;
    border-radius: 50%;
    background: #bcd3e2;
}

.ie {
    width: 34px;
    height: 20px;
    margin-top: 3px;
    border-radius: 50%;
    border-top: 3px solid #e2d436;
}

.task {
    width: 158px;
    margin-right: 3px;
    padding-left: 16px;
    background: linear-gradient(100deg, #c3dae6, #5f9cc2);
    border-top: 1px solid #eaf4fa;
}

.task::before {
    content: "";
    display: block;
    width: 18px;
    height: 18px;
    margin-top: 2px;
    border-radius: 50%;
}

.task.light {
    background: linear-gradient(100deg, #e8f2f6, #b5d5e2);
}

.red::before {
    background: #d0443f;
}

.navy::before {
    width: 28px;
    border-radius: 0;
    background: #1c2f78;
}

.lime::before {
    background: linear-gradient(90deg, #d5dc2c, #44a843);
}

.black::before {
    background: #1c2422;
}

.green::before {
    background: #91ce80;
}

.clock {
    margin: 3px 24px 0 auto;
    color: #fff;
}

.show {
    width: 23px;
    border: 1px solid #aaa;
    background: #5e7891;
}

/* 色阶对话框 */
.dialog {
    position: absolute;
    left: 1062px;
    top: 32px;
    width: 428px;
    padding: 0 5px 7px 6px;
    border: 1px solid #1c2730;
    border-radius: 6px;
    color: #111;
    background:
        linear-gradient(90deg, #b5d8f8 56px, #35414d 64px) bottom / 100% 8px no-repeat,
        linear-gradient(#9aa4ae 0 110px, #333c46 118px 140px, #b5d8f8 148px) left / 8px 100% no-repeat,
        linear-gradient(#9aa4ae 100px, #35414d 118px) right / 8px 100% no-repeat,
        linear-gradient(90deg, #a5abb1, #77828e 20%, #3f5263 48%, #8793a0 65%, #5a6a79 80%, #a3adb7);
    box-shadow: inset 0 0 0 1px #d0dde8, 0 3px 10px 3px #0009;
}

.dlg-title {
    height: 28px;
    display: flex;
    justify-content: space-between;
    align-items: flex-start;
}

.dlg-title span {
    padding: 6px 0 0;
    text-shadow: 0 0 6px #fff;
}

.dlg-title button {
    width: 48px;
    height: 19px;
    display: grid;
    place-items: center;
    border: 1px solid #eccfc8;
    border-top: 0;
    border-radius: 0 0 4px 4px;
    background: linear-gradient(#dc9a8b, #cc6b55 45%, #b02f1c 50%, #d2512c);
}

.dlg-body {
    display: flex;
    justify-content: space-between;
    height: 348px;
    padding: 10px 10px 12px 10px;
    background: #ededed;
    border: 1px solid #26313b;
    box-shadow: 0 0 0 1px #c3d2df;
}

.dlg-left {
    width: 282px;
    display: flex;
    flex-direction: column;
}

.dialog select {
    height: 21px;
    padding-left: 5px;
    border: 1px solid #e0e0e0;
    border-top-color: #aaa;
    background: #fff url('data:image/svg+xml,<svg xmlns="http://www.w3.org/2000/svg" width="8" height="5"><path d="M0 0h8L4 5z"/></svg>') right 4px center no-repeat;
}

.preset {
    display: flex;
    align-items: center;
}

.preset select {
    flex: 1;
    margin: 0 11px 0 11px;
}

fieldset {
    min-width: 0;
    margin-top: 19px;
    height: 284px;
    padding: 0 6px 0 8px;
    border: 1px solid #999;
    display: flex;
    flex-direction: column;
}

legend {
    display: flex;
    align-items: center;
    margin-left: 5px;
    padding: 0 7px 0 22px;
}

legend select {
    width: 91px;
    margin-left: 6px;
}

fieldset > label {
    margin-top: 11px;
}

.histo {
    width: 258px;
    height: 102px;
    margin: 3px 0 0 4px;
    border: 1px solid #999;
    background: #fbfbfb;
}

.thumbs {
    display: grid;
    width: 268px;
    margin-left: -1px;
}

.thumbs input {
    grid-area: 1 / 1;
    width: 267px;
    height: 11px;
    pointer-events: none;
}

.thumbs input::-webkit-slider-thumb {
    pointer-events: auto;
}

.thumbs .t-black::-webkit-slider-thumb {
    background: url('data:image/svg+xml,<svg xmlns="http://www.w3.org/2000/svg" width="11" height="10"><path d="M5.500 1L10 6v3.500H1V6z" fill="%23222" stroke="%23333"/></svg>');
}

.thumbs .t-gray::-webkit-slider-thumb {
    background: url('data:image/svg+xml,<svg xmlns="http://www.w3.org/2000/svg" width="11" height="10"><path d="M5.500 1L10 6v3.500H1V6z" fill="%23888" stroke="%23666"/></svg>');
}

.thumbs .t-white::-webkit-slider-thumb {
    background: url('data:image/svg+xml,<svg xmlns="http://www.w3.org/2000/svg" width="11" height="10"><path d="M5.500 1L10 6v3.500H1V6z" fill="%23eee" stroke="%23777"/></svg>');
}

.nums {
    display: flex;
    justify-content: space-between;
    margin-top: 6px;
}

.nums input {
    width: 59px;
    height: 20px;
    padding-left: 5px;
    border: 1px solid #ddd;
    border-top-color: #aaa;
    background: #fff;
}

fieldset hr {
    height: 1px;
    flex: none;
    margin-top: 9px;
    border: 0;
    background: #999;
}

fieldset hr + label {
    margin-top: 6px;
}

.ramp {
    width: 258px;
    height: 13px;
    margin: 4px 0 0 4px;
    border: 1px solid #999;
    background: linear-gradient(90deg, #000, #fff);
}

.dlg-right {
    width: 92px;
    display: flex;
    flex-direction: column;
}

.btn {
    height: 19px;
    margin: 0 0 9px;
    border: 1px solid #777;
    border-radius: 3px;
    background: linear-gradient(#f4f4f4 45%, #ddd 50%, #d2d2d2);
    line-height: 15px;
}

.btn.ok {
    border-color: #2e88ad;
    box-shadow: inset 0 0 0 1px #5ccdf0;
}

.btn.spaced {
    margin: 7px 0 9px;
}

.pickers {
    display: flex;
    gap: 1px;
    margin: 6px 6px 0 auto;
}

.pickers button {
    --edge: #444;
    width: 26px;
    height: 22px;
    display: grid;
    place-items: center;
    color: #222;
}

.pickers .p-black {
    --tube: #222;
}

.pickers .p-gray {
    --tube: #999;
}

.pickers .p-white {
    --tube: #fff;
    border: 1px solid #555;
    border-radius: 3px;
    background: #dcdcdc;
}

.preview {
    display: flex;
    align-items: center;
    margin-top: 14px;
}

.preview input {
    appearance: none;
    width: 13px;
    height: 13px;
    margin-right: 3px;
    border: 1px solid #8a8f94;
    background: #eef2f8 url('data:image/svg+xml,<svg xmlns="http://www.w3.org/2000/svg" width="11" height="11"><path d="M2 5l3 4 4-8" fill="none" stroke="%23405a9c" stroke-width="2"/></svg>');
}

/* 站点标识 */
.site {
    position: absolute;
    right: 14px;
    bottom: 8px;
    display: flex;
    align-items: flex-start;
    gap: 4px;
}

.site strong, .site span {
    display: block;
    white-space: nowrap;
}

.site strong {
    color: #30368e;
    font: 900 32px/32px "Noto Sans CJK SC", sans-serif;
    text-shadow: 0 0 2px #aaa, 0 0 2px #999;
}

.site span {
    color: #b04545;
    font: bold 18px/20px "Liberation Mono", monospace;
    text-shadow: 0 0 1px #aaa;
}
```
